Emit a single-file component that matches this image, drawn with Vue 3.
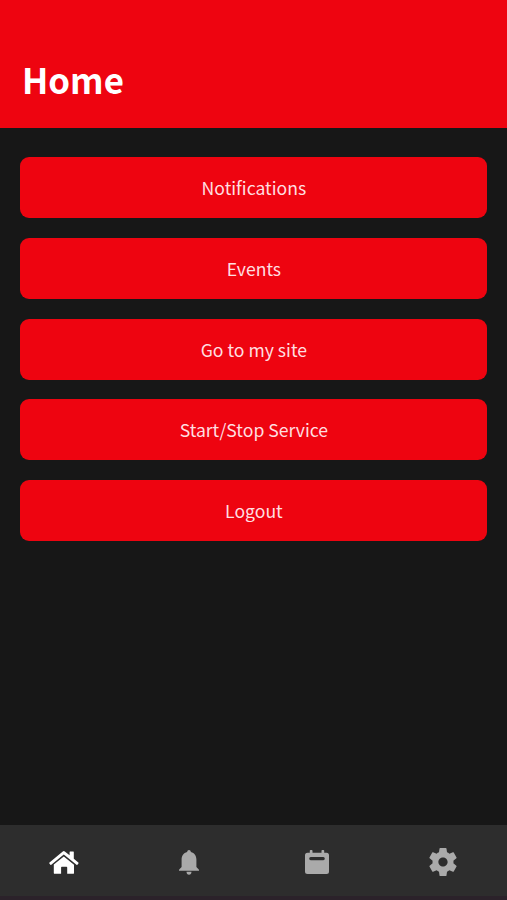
<template>
  <div class="app-screen">
    <header class="app-header">
      <h1 class="title">Home</h1>
    </header>

    <main class="menu">
      <button v-for="item in menuItems" :key="item" type="button" class="menu-button">
        {{ item }}
      </button>
    </main>

    <nav class="tab-bar">
      <button
        v-for="tab in tabs"
        :key="tab.name"
        type="button"
        class="tab"
        :class="[tab.name, { active: activeTab === tab.name }]"
        :aria-label="tab.name"
        @click="activeTab = tab.name"
      >
        <svg class="tab-icon" :viewBox="tab.viewBox">
          <path v-for="d in tab.paths" :key="d" :d="d" fill-rule="evenodd" />
        </svg>
      </button>
    </nav>
  </div>
</template>

<script setup>
import { ref } from 'vue'

const activeTab = ref('home')

const menuItems = ['Notifications', 'Events', 'Go to my site', 'Start/Stop Service', 'Logout']

const tabs = [
  {
    name: 'home',
    viewBox: '0 0 30 23',
    paths: [
      'M13.800.4q1-.7 2 0L20.600 4.300V.9q0-.5.5-.5h3.200q.5 0 .5.5V7.800L29.300 11.600q.5.4.1.9L28.400 13.700q-.4.4-.9 0L14.800 3.600 2.300 13.700q-.5.4-.9 0L.4 12.500q-.4-.5.1-.9z',
      'M14.800 5.400 25 13.700V21.900q0 .9-.9.9H18.200V16.400q0-.7-.7-.7H12.800q-.7 0-.7.7V22.800H5.700q-.9 0-.9-.9V13.600z'
    ]
  },
  {
    name: 'notifications',
    viewBox: '0 0 20 25',
    paths: [
      'M10 0c1 0 1.700.8 1.900 2 3.500.9 5.500 3.800 5.500 7.500V17L20 19.800V20.700H0V19.800L2.600 17V9.500C2.600 5.800 4.600 2.900 8.100 2 8.300.8 9 0 10 0z',
      'M7.500 21.700H12.500C12.500 23.600 11.500 24.700 10 24.700S7.500 23.600 7.500 21.700z'
    ]
  },
  {
    name: 'events',
    viewBox: '0 0 24 24',
    paths: [
      'M4.800.8Q4.800 0 5.600 0H6.700Q7.500 0 7.500.8V2.800H16.500V.8Q16.500 0 17.300 0H18.400Q19.200 0 19.200.8V2.800H21.500Q24 2.800 24 5.300V21.500Q24 24 21.500 24H2.500Q0 24 0 21.500V5.300Q0 2.800 2.500 2.800H4.800zM5.700 7q-1.500 0-1.500 1.600T5.700 10.200h12.600q1.500 0 1.500-1.600T18.300 7z'
    ]
  },
  {
    name: 'settings',
    viewBox: '2 2 20 20',
    paths: [
      'M19.430 12.980c.04-.32.07-.64.07-.98s-.03-.66-.07-.98l2.110-1.650c.19-.15.24-.42.12-.64l-2-3.460c-.12-.22-.39-.3-.61-.22l-2.490 1c-.52-.4-1.080-.73-1.690-.98l-.38-2.650C14.460 2.180 14.250 2 14 2h-4c-.25 0-.46.18-.49.42l-.38 2.650c-.61.25-1.170.59-1.690.98l-2.490-1c-.23-.09-.49 0-.61.22l-2 3.460c-.13.22-.07.49.12.64l2.110 1.650c-.04.32-.07.65-.07.98s.03.66.07.98l-2.110 1.650c-.19.15-.24.42-.12.64l2 3.460c.12.22.39.3.61.22l2.490-1c.52.4 1.080.73 1.690.98l.38 2.650c.03.24.24.42.49.42h4c.25 0 .46-.18.49-.42l.38-2.650c.61-.25 1.170-.59 1.690-.98l2.490 1c.23.09.49 0 .61-.22l2-3.460c.12-.22.07-.49-.12-.64l-2.110-1.650zM12 15.300c-1.820 0-3.300-1.480-3.300-3.300s1.480-3.300 3.300-3.300 3.300 1.480 3.300 3.300-1.480 3.300-3.300 3.300z'
    ]
  }
]
</script>

<style>
body {
  margin: 0;
  background: #171717;
}
</style>

<style scoped>
.app-screen {
  display: flex;
  flex-direction: column;
  height: 100vh;
  background: #171717;
  font-family: "Noto Sans CJK SC", "Noto Sans", sans-serif;
  overflow: hidden;
}

.app-header {
  box-sizing: border-box;
  height: 128px;
  padding: 53px 22px 0;
  background: #ee0410;
  flex-shrink: 0;
}

.title {
  margin: 0;
  color: #fff;
  font-size: 34.8px;
  line-height: 52px;
  font-weight: 700;
}

.menu {
  flex: 1;
  display: flex;
  flex-direction: column;
  gap: 19.7px;
  padding: 29.4px 19.6px 0 20.4px;
}

.menu-button {
  box-sizing: border-box;
  height: 61px;
  padding: 1px 0 0;
  border: 0;
  border-radius: 9px;
  background: #ee0410;
  color: #ffdfe0;
  font-family: inherit;
  font-size: 17.6px;
  line-height: 28px;
}

.tab-bar {
  box-sizing: border-box;
  height: 75.5px;
  display: grid;
  grid-template-columns: 126px 123px 133px 119px;
  padding-left: 1px;
  background: #2d2d2d;
  border-bottom: 4px solid #2b222a;
  flex-shrink: 0;
}

.tab {
  display: flex;
  align-items: center;
  justify-content: center;
  height: 75px;
  padding: 0;
  border: 0;
  background: none;
  color: #aaa;
}

.tab.active {
  color: #fff;
}

.tab-icon {
  display: block;
  fill: currentColor;
}

.home .tab-icon {
  width: 30px;
  height: 23px;
}

.notifications .tab-icon {
  width: 20px;
  height: 25px;
}

.events .tab-icon {
  width: 24px;
  height: 24px;
}

.settings .tab-icon {
  width: 28px;
  height: 28px;
}
</style>
